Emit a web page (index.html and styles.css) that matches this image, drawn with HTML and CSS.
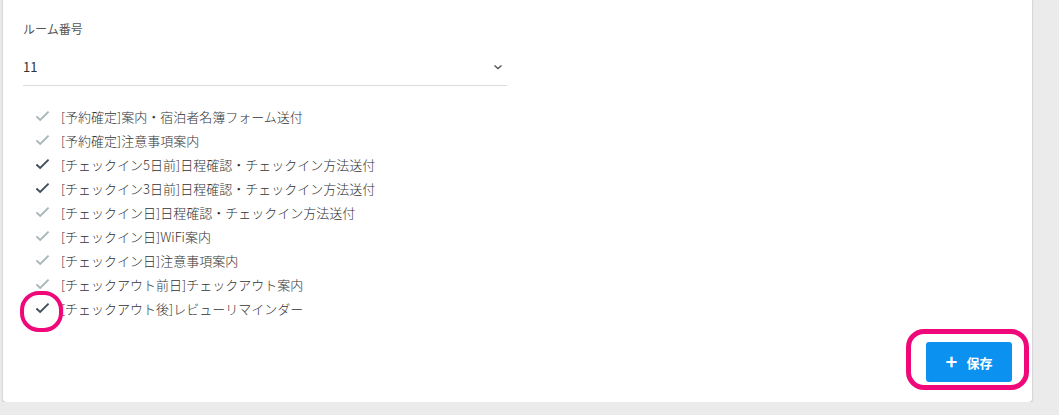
FILE: index.html
```html
<!DOCTYPE html>
<html lang="ja">
<head>
    <meta charset="UTF-8">
    <title>メッセージ設定</title>
    <link rel="stylesheet" href="styles.css">
</head>
<body>
    <div class="card">
        <div class="field">
            <label class="field-label">ルーム番号</label>
            <div class="select">
                <span>11</span>
                <svg class="chevron" width="10" height="6" viewBox="0 0 10 6"><path d="M1.5 1.5 L5 4.5 L8.5 1.5" fill="none" stroke="#555" stroke-width="1.4"/></svg>
            </div>
        </div>

        <ul class="messages">
            <li><svg class="check" viewBox="0 0 16 12"><path d="M1.5 6.5 L5.5 10.2 L14.5 1.3"/></svg>[予約確定]案内・宿泊者名簿フォーム送付</li>
            <li><svg class="check" viewBox="0 0 16 12"><path d="M1.5 6.5 L5.5 10.2 L14.5 1.3"/></svg>[予約確定]注意事項案内</li>
            <li class="on"><svg class="check" viewBox="0 0 16 12"><path d="M1.5 6.5 L5.5 10.2 L14.5 1.3"/></svg>[チェックイン5日前]日程確認・チェックイン方法送付</li>
            <li class="on"><svg class="check" viewBox="0 0 16 12"><path d="M1.5 6.5 L5.5 10.2 L14.5 1.3"/></svg>[チェックイン3日前]日程確認・チェックイン方法送付</li>
            <li><svg class="check" viewBox="0 0 16 12"><path d="M1.5 6.5 L5.5 10.2 L14.5 1.3"/></svg>[チェックイン日]日程確認・チェックイン方法送付</li>
            <li><svg class="check" viewBox="0 0 16 12"><path d="M1.5 6.5 L5.5 10.2 L14.5 1.3"/></svg>[チェックイン日]WiFi案内</li>
            <li><svg class="check" viewBox="0 0 16 12"><path d="M1.5 6.5 L5.5 10.2 L14.5 1.3"/></svg>[チェックイン日]注意事項案内</li>
            <li><svg class="check" viewBox="0 0 16 12"><path d="M1.5 6.5 L5.5 10.2 L14.5 1.3"/></svg>[チェックアウト前日]チェックアウト案内</li>
            <li class="on marked"><svg class="check" viewBox="0 0 16 12"><path d="M1.5 6.5 L5.5 10.2 L14.5 1.3"/></svg>[チェックアウト後]レビューリマインダー<span class="ring ring-check"></span></li>
        </ul>

        <div class="actions">
            <span class="save-wrap">
                <button class="save"><span class="plus">+</span>保存</button>
                <span class="ring ring-save"></span>
            </span>
        </div>
    </div>
</body>
</html>
```

FILE: styles.css
```css
body {
    margin: 0;
    padding: 0 0 0 3px;
    background-color: #ebebeb;
    font-family: "Noto Sans CJK JP", "Noto Sans", sans-serif;
    color: #333;
}
.card {
    width: 1029px;
    margin-top: -4px;
    padding: 24px 20px 20px 20px;
    box-sizing: border-box;
    background-color: #fff;
    border-radius: 3px;
    box-shadow: 0 1px 2px rgba(0, 0, 0, 0.3);
}
.field {
    width: 484px;
}
.field-label {
    display: block;
    font-size: 12px;
    line-height: 18px;
    color: #555;
    margin-bottom: 11px;
}
.select {
    display: flex;
    justify-content: space-between;
    align-items: center;
    height: 34px;
    padding: 0 4px 2px 0;
    border-bottom: 1px solid #dcdcdc;
    font-size: 13px;
    color: #333;
}
.chevron {
    margin-top: 2px;
}
.messages {
    list-style: none;
    margin: 18px 0 0 0;
    padding: 0 0 0 12px;
}
.messages li {
    position: relative;
    display: flex;
    align-items: center;
    height: 24px;
    font-size: 13px;
    font-weight: 300;
    color: #333;
}
.check {
    width: 15px;
    height: 12px;
    margin-right: 11px;
    fill: none;
    stroke: #a7b3b6;
    stroke-width: 1.9;
}
.messages li.on .check {
    stroke: #3d4f58;
    stroke-width: 2;
}
.actions {
    display: flex;
    justify-content: flex-end;
    margin-top: 22px;
}
.save-wrap {
    position: relative;
    display: inline-block;
}
.save {
    display: flex;
    align-items: center;
    justify-content: center;
    width: 86px;
    height: 40px;
    background-color: #0b92f1;
    color: #fff;
    border: none;
    border-radius: 3px;
    font-family: inherit;
    font-size: 13px;
    font-weight: bold;
    cursor: pointer;
}
.plus {
    font-size: 20px;
    font-weight: bold;
    margin-right: 9px;
    line-height: 1;
    margin-top: -2px;
}
.ring {
    position: absolute;
    border: 4px solid #f0087b;
    box-sizing: border-box;
    pointer-events: none;
}
.ring-check {
    left: -15px;
    top: -5px;
    width: 43px;
    height: 41px;
    border-radius: 19px;
}
.ring-save {
    left: -20px;
    top: -13px;
    width: 123px;
    height: 61px;
    border-radius: 18px;
    border-width: 5px;
}
```
